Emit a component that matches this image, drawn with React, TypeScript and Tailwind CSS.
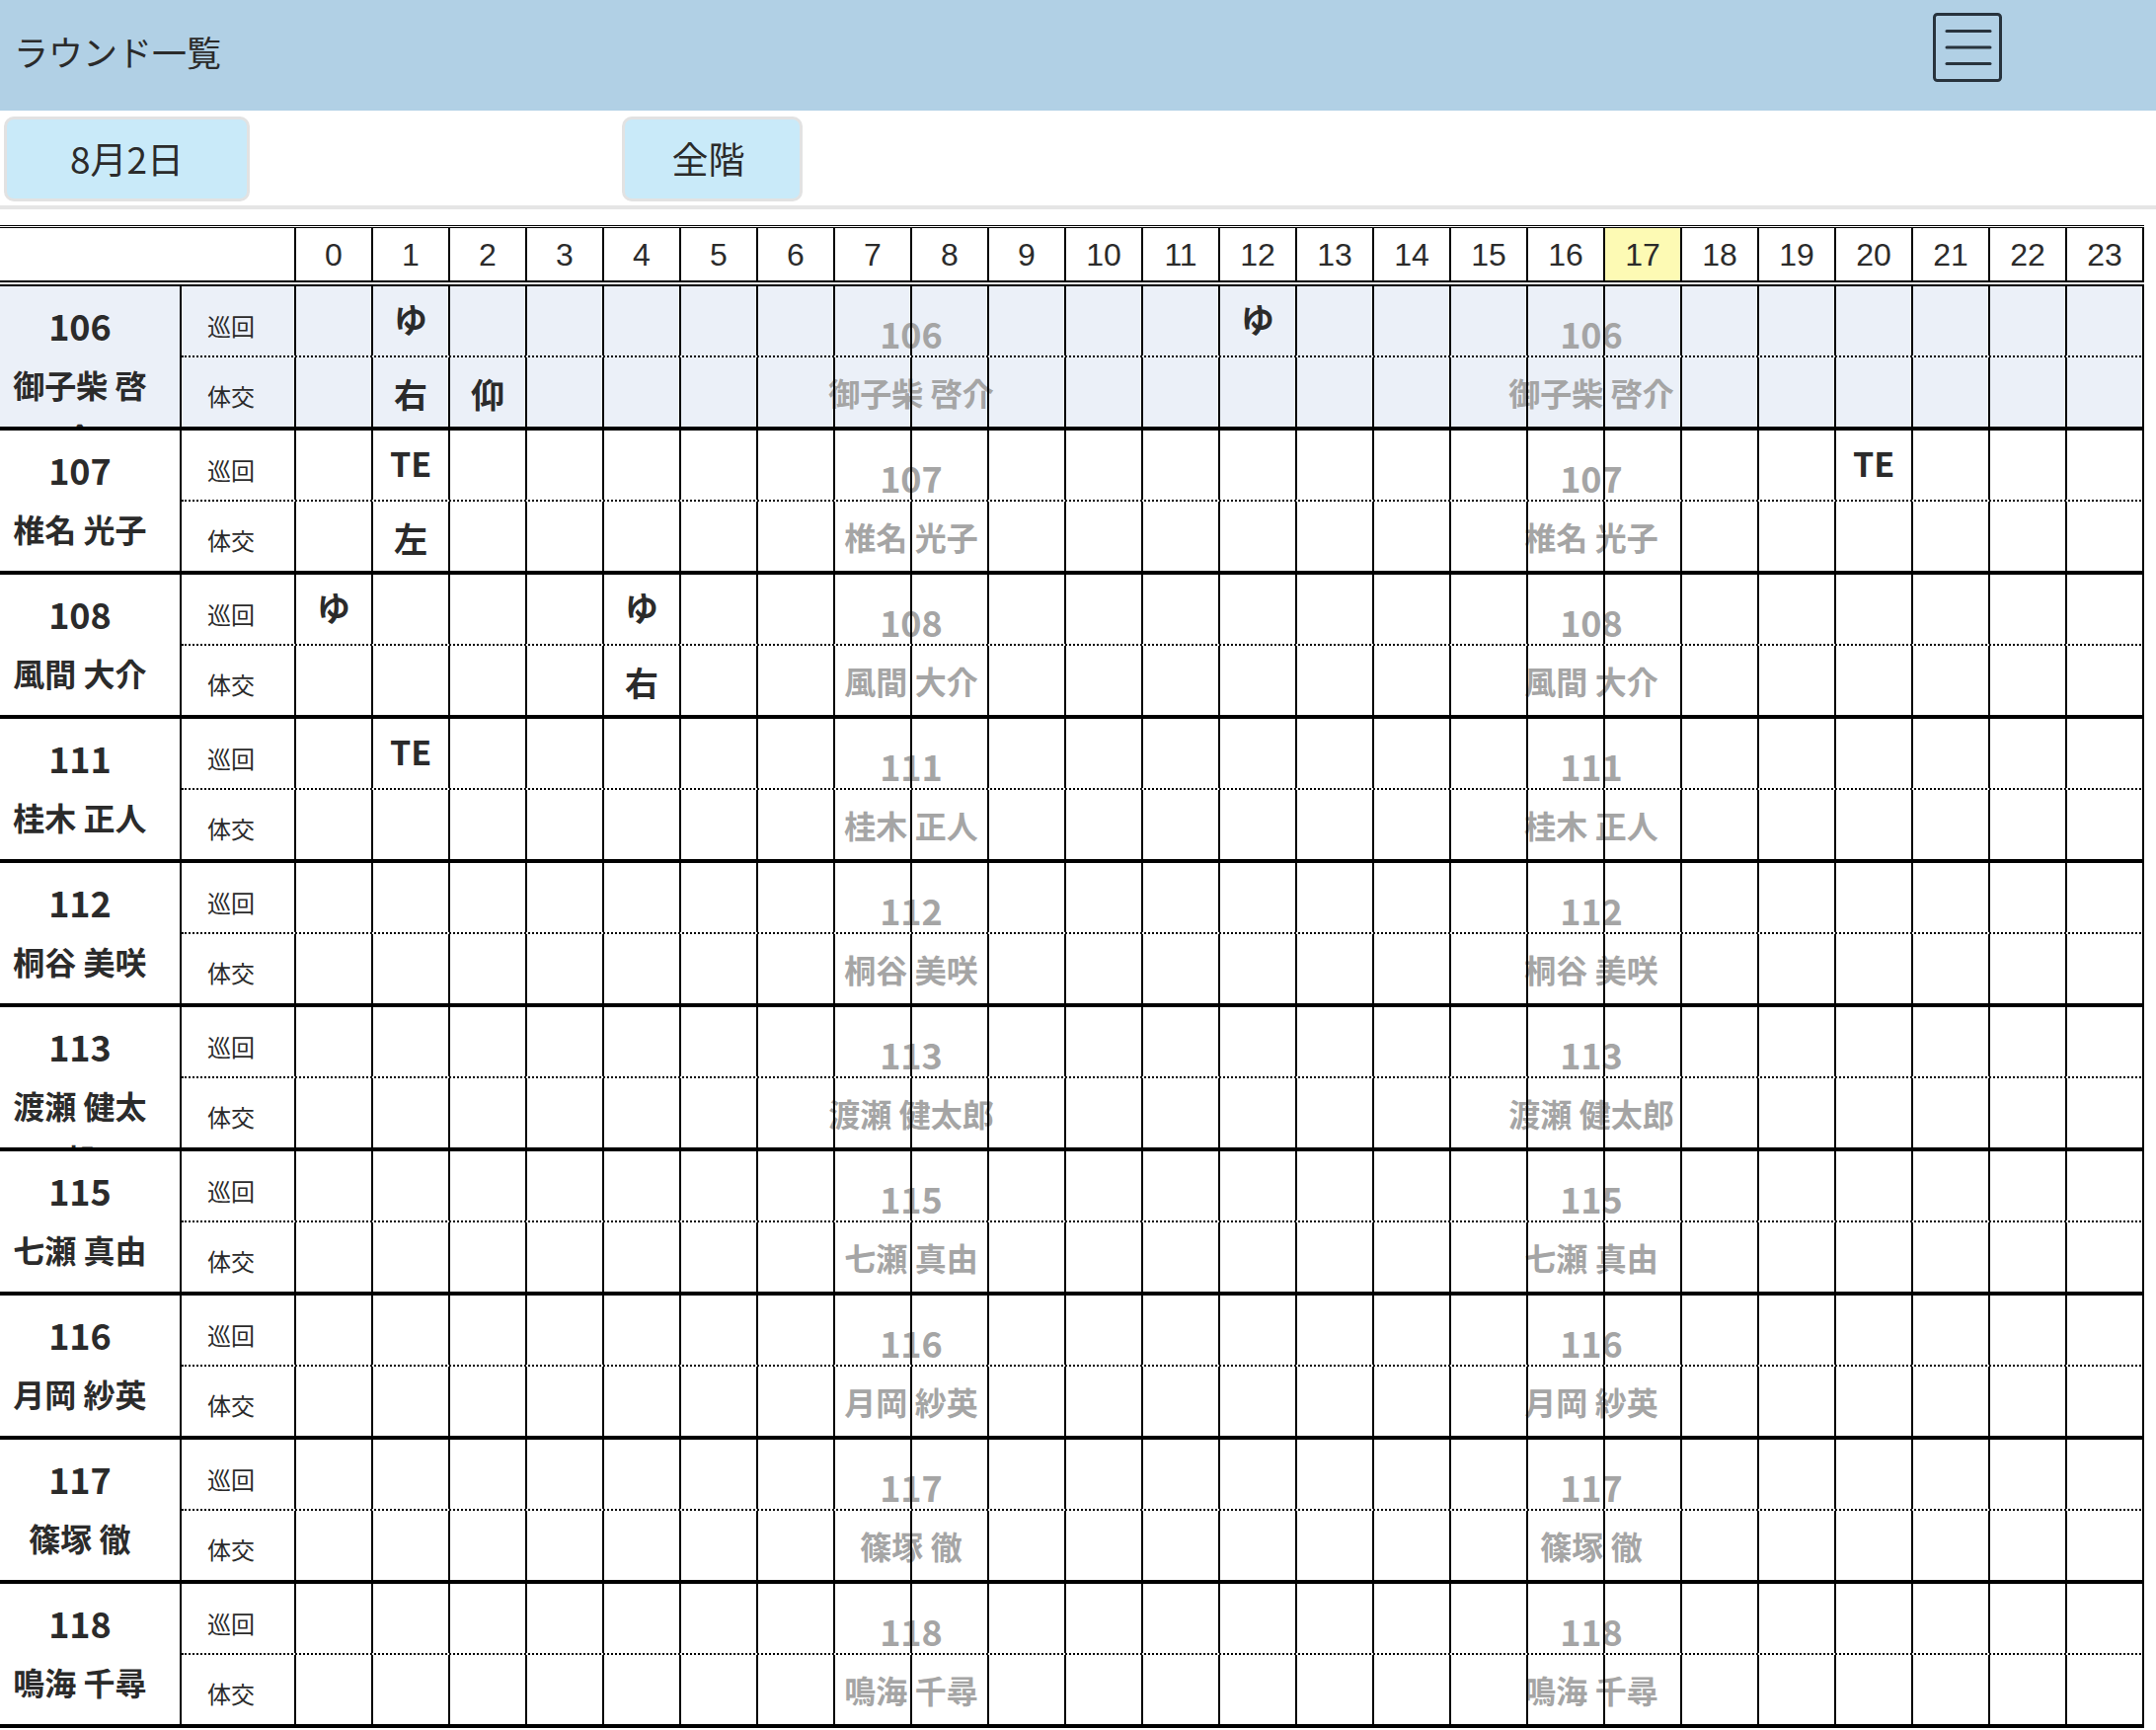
import clsx from "clsx";

type Marks = Record<number, string>;

type Resident = {
  room: string;
  name: string;
  patrol: Marks; // 巡回
  turn: Marks; // 体交
  selected?: boolean;
};

const RESIDENTS: Resident[] = [
  { room: "106", name: "御子柴 啓介", patrol: { 1: "ゆ", 12: "ゆ" }, turn: { 1: "右", 2: "仰" }, selected: true },
  { room: "107", name: "椎名 光子", patrol: { 1: "TE", 20: "TE" }, turn: { 1: "左" } },
  { room: "108", name: "風間 大介", patrol: { 0: "ゆ", 4: "ゆ" }, turn: { 4: "右" } },
  { room: "111", name: "桂木 正人", patrol: { 1: "TE" }, turn: {} },
  { room: "112", name: "桐谷 美咲", patrol: {}, turn: {} },
  { room: "113", name: "渡瀬 健太郎", patrol: {}, turn: {} },
  { room: "115", name: "七瀬 真由", patrol: {}, turn: {} },
  { room: "116", name: "月岡 紗英", patrol: {}, turn: {} },
  { room: "117", name: "篠塚 徹", patrol: {}, turn: {} },
  { room: "118", name: "鳴海 千尋", patrol: {}, turn: {} },
];

const HOURS = Array.from({ length: 24 }, (_, i) => i);
const CURRENT_HOUR = 17;

const JP = "font-['Noto_Sans_CJK_JP',sans-serif]";

function MenuIcon() {
  return (
    <svg width="70" height="70" viewBox="0 0 70 70" fill="none" stroke="#28333d" strokeWidth="3" strokeLinecap="round">
      <rect x="1.5" y="1.5" width="67" height="67" rx="3" />
      <line x1="14" y1="18.5" x2="58" y2="18.5" />
      <line x1="14" y1="35" x2="58" y2="35" />
      <line x1="14" y1="51.5" x2="58" y2="51.5" />
    </svg>
  );
}

// faint room/name label drawn behind the grid lines
function Watermark({ r, className }: { r: Resident; className: string }) {
  return (
    <div
      className={clsx(
        "absolute top-[25px] flex -translate-x-1/2 flex-col items-center whitespace-nowrap font-bold text-[#a5a5a5]",
        className
      )}
    >
      <div className="text-[36px] leading-[44px]">{r.room}</div>
      <div className="mt-[16px] text-[32px] leading-[44px]">{r.name}</div>
    </div>
  );
}

function ResidentRow({ r }: { r: Resident }) {
  return (
    <div className={clsx("relative flex border-b-4 border-black", r.selected ? "bg-[#ebf0f8]" : "bg-white")}>
      <Watermark r={r} className="left-[923px]" />
      <Watermark r={r} className="left-[1612px]" />

      <div className="relative z-10 h-[142px] w-[184px] shrink-0 overflow-hidden border-r-2 border-black pl-[2px] pr-[22px] pt-[17px] text-center font-bold text-[#2b2b2b]">
        <div className="text-[36px] leading-[44px]">{r.room}</div>
        <div className="mt-[11px] text-[32px] leading-[54px]">{r.name}</div>
      </div>

      <div className="relative z-10 flex flex-col">
        <div className="grid h-[72px] grid-cols-[116px_repeat(24,78px)] border-b-2 border-dotted border-black">
          <div className="flex items-center justify-center border-r-2 border-black pr-[14px] pt-[10px] text-[24px] text-[#2b2b2b]">
            巡回
          </div>
          {HOURS.map((h) => (
            <div
              key={h}
              className="flex items-center justify-center border-r-2 border-black pb-[5px] text-[34px] font-bold text-[#2b2b2b]"
            >
              {r.patrol[h]}
            </div>
          ))}
        </div>
        <div className="grid h-[70px] grid-cols-[116px_repeat(24,78px)]">
          <div className="flex items-center justify-center border-r-2 border-black pr-[14px] pt-[8px] text-[24px] text-[#2b2b2b]">
            体交
          </div>
          {HOURS.map((h) => (
            <div
              key={h}
              className="flex items-center justify-center border-r-2 border-black pt-[2px] text-[34px] font-bold text-[#2b2b2b]"
            >
              {r.turn[h]}
            </div>
          ))}
        </div>
      </div>
    </div>
  );
}

export default function App() {
  return (
    <div className={clsx("min-h-screen w-[2184px] overflow-hidden bg-white text-[#2b2b2b]", JP)}>
      {/* top bar */}
      <header className="flex h-[112px] items-center justify-between bg-[#b1d0e5] pb-[8px] pl-[14px] pr-[156px]">
        <h1 className="text-[35px] font-normal">ラウンド一覧</h1>
        <button className="mt-[13px] self-start">
          <MenuIcon />
        </button>
      </header>

      {/* filters */}
      <div className="mt-[6px] flex pl-[4px]">
        <button className="flex h-[86px] w-[249px] items-center justify-center rounded-[10px] border-[3px] border-[#e2e2e2] bg-[#c9eaf9] text-[37px]">
          8月2日
        </button>
        <button className="ml-[377px] flex h-[86px] w-[183px] items-center justify-center rounded-[10px] border-[3px] border-[#e2e2e2] bg-[#c9eaf9] pr-[8px] text-[37px]">
          全階
        </button>
      </div>
      <div className="mt-[4px] h-[4px] bg-[#e5e5e5]" />

      {/* schedule table */}
      <div className="mt-[16px] w-[2172px]">
        <div className="grid h-[62px] grid-cols-[300px_repeat(24,78px)] border-t-[3px] border-b-[6px] border-double border-black">
          <div className="border-r-2 border-black" />
          {HOURS.map((h) => (
            <div
              key={h}
              className={clsx(
                "flex items-center justify-center border-r-2 border-black font-['Liberation_Sans','Noto_Sans_CJK_JP',sans-serif] text-[32px] text-[#2b2b2b]",
                h === CURRENT_HOUR && "bg-[#fdfab4]"
              )}
            >
              {h}
            </div>
          ))}
        </div>

        {RESIDENTS.map((r) => (
          <ResidentRow key={r.room} r={r} />
        ))}
      </div>
    </div>
  );
}
